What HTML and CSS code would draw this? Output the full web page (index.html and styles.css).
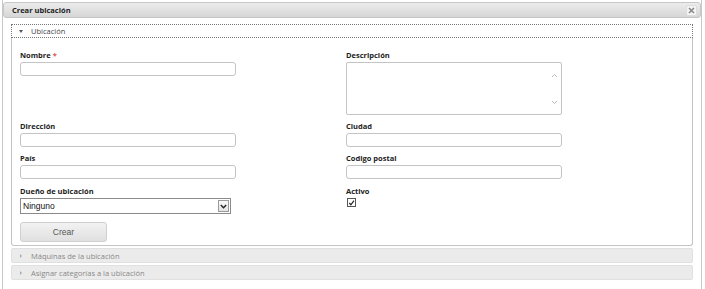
FILE: index.html
```html
<!DOCTYPE html>
<html lang="es">
<head>
    <meta charset="UTF-8">
    <title>Crear ubicación</title>
    <link rel="stylesheet" href="styles.css">
</head>
<body>
    <div class="dialog">
        <div class="dialog-title">
            <span>Crear ubicación</span>
            <div class="close-btn">
                <svg width="7" height="7" viewBox="0 0 7 7"><path d="M1 1L6 6M6 1L1 6" stroke="#888" stroke-width="1.6"/></svg>
            </div>
        </div>
        <div class="dialog-body">
            <div class="acc-header active">
                <span class="acc-arrow down"></span>
                <span>Ubicación</span>
            </div>
            <div class="acc-content">
                <div class="form-grid">
                    <div class="field">
                        <label>Nombre<span class="req">*</span></label>
                        <div class="input"></div>
                    </div>
                    <div class="field">
                        <label>Descripción</label>
                        <div class="textarea">
                            <svg class="sc-up" width="7" height="5" viewBox="0 0 7 5"><path d="M1 4L3.5 1.5L6 4" fill="none" stroke="#bbb"/></svg>
                            <svg class="sc-down" width="7" height="5" viewBox="0 0 7 5"><path d="M1 1L3.5 3.5L6 1" fill="none" stroke="#bbb"/></svg>
                        </div>
                    </div>
                    <div class="field">
                        <label>Dirección</label>
                        <div class="input"></div>
                    </div>
                    <div class="field">
                        <label>Ciudad</label>
                        <div class="input"></div>
                    </div>
                    <div class="field">
                        <label>País</label>
                        <div class="input"></div>
                    </div>
                    <div class="field">
                        <label>Codigo postal</label>
                        <div class="input"></div>
                    </div>
                    <div class="field last">
                        <label>Dueño de ubicación</label>
                        <div class="select">
                            <span>Ninguno</span>
                            <div class="select-btn">
                                <svg width="7" height="5" viewBox="0 0 7 5"><path d="M0.8 1L3.5 3.8L6.2 1" fill="none" stroke="#222" stroke-width="1.4"/></svg>
                            </div>
                        </div>
                    </div>
                    <div class="field last">
                        <label>Activo</label>
                        <div class="checkbox">
                            <svg width="8" height="8" viewBox="0 0 8 8"><path d="M1.5 4L3.3 6L6.8 1.2" fill="none" stroke="#222" stroke-width="1.3"/></svg>
                        </div>
                    </div>
                </div>
                <div class="button">Crear</div>
            </div>
            <div class="acc-header">
                <span class="acc-arrow right"></span>
                <span>Máquinas de la ubicación</span>
            </div>
            <div class="acc-header">
                <span class="acc-arrow right"></span>
                <span>Asignar categorías a la ubicación</span>
            </div>
        </div>
    </div>
</body>
</html>
```

FILE: styles.css
```css
body {
    margin: 0;
    padding: 0;
    background: #fff;
    font-family: "Open Sans", sans-serif;
    color: #222;
    overflow: hidden;
}
.dialog {
    margin-left: 2px;
    width: 700px;
    height: 300px;
    padding-top: 2px;
    border-left: 1px solid #c8c8c8;
    border-right: 1px solid #c8c8c8;
    box-sizing: border-box;
}
.dialog-title {
    height: 16px;
    box-sizing: border-box;
    border: 1px solid #c6c6c6;
    border-radius: 3px;
    background: linear-gradient(180deg, #ececec 0%, #d6d6d6 100%);
    display: flex;
    align-items: center;
    justify-content: space-between;
    padding: 0 3px 0 8px;
    font-size: 7.5px;
    font-weight: bold;
    color: #222;
}
.close-btn {
    width: 11px;
    height: 11px;
    box-sizing: border-box;
    border: 1px solid #ddd;
    border-radius: 2px;
    background: #f4f4f4;
    display: flex;
    align-items: center;
    justify-content: center;
}
.dialog-body {
    padding: 6px 8px 0 8px;
}
.acc-header {
    height: 15px;
    box-sizing: border-box;
    display: flex;
    align-items: center;
    padding-left: 7px;
    font-size: 7.5px;
    color: #888;
    background: #ebebeb;
    border: 1px solid #e0e0e0;
    border-radius: 2px;
    margin-top: 2px;
}
.acc-header.active {
    margin-top: 0;
    background: #fff;
    color: #444;
    border: 1px dotted #777;
    border-radius: 0;
    height: 14px;
}
.acc-arrow {
    width: 0;
    height: 0;
    margin-right: 8px;
}
.acc-arrow.down {
    border-left: 2.5px solid transparent;
    border-right: 2.5px solid transparent;
    border-top: 3px solid #555;
}
.acc-arrow.right {
    border-top: 2px solid transparent;
    border-bottom: 2px solid transparent;
    border-left: 2.5px solid #aaa;
    margin-left: 1px;
    margin-right: 9px;
}
.acc-content {
    border: 1px solid #c4c4c4;
    border-top: none;
    border-radius: 0 0 3px 3px;
    height: 208px;
    box-sizing: border-box;
    padding: 13px 8px 0 8px;
}
.form-grid {
    display: grid;
    grid-template-columns: 326px 216px;
    row-gap: 7px;
}
.field.last {
    margin-top: 1px;
}
.field label {
    display: block;
    font-size: 7.5px;
    font-weight: bold;
    color: #222;
    height: 8px;
    line-height: 8px;
    margin-bottom: 3px;
}
.req {
    color: #e05050;
    margin-left: 2px;
}
.input {
    width: 216px;
    height: 14px;
    box-sizing: border-box;
    border: 1px solid #c4c4c4;
    border-radius: 3px;
}
.textarea {
    position: relative;
    width: 216px;
    height: 53px;
    box-sizing: border-box;
    border: 1px solid #c4c4c4;
    border-radius: 2px;
}
.sc-up {
    position: absolute;
    right: 3px;
    top: 10px;
}
.sc-down {
    position: absolute;
    right: 3px;
    top: 37px;
}
.select {
    width: 211px;
    height: 16px;
    box-sizing: border-box;
    border: 1px solid #8a8a8a;
    display: flex;
    align-items: center;
    justify-content: space-between;
    padding: 0 1px 0 2px;
    font-family: "Liberation Sans", Arial, sans-serif;
    font-size: 8.5px;
    color: #111;
}
.select-btn {
    width: 11px;
    height: 12px;
    box-sizing: border-box;
    border: 1px solid #999;
    background: linear-gradient(180deg, #fafafa, #e4e4e4);
    display: flex;
    align-items: center;
    justify-content: center;
}
.checkbox {
    width: 9px;
    height: 9px;
    box-sizing: border-box;
    border: 1px solid #555;
    margin: 0 0 0 1px;
    display: flex;
    align-items: center;
    justify-content: center;
}
.button {
    margin-top: 8px;
    width: 87px;
    height: 20px;
    box-sizing: border-box;
    border: 1px solid #d0d0d0;
    border-radius: 3px;
    background: linear-gradient(180deg, #f2f2f2 0%, #e0e0e0 100%);
    font-family: "Liberation Sans", Arial, sans-serif;
    font-size: 8.5px;
    color: #555;
    display: flex;
    align-items: center;
    justify-content: center;
}
```
